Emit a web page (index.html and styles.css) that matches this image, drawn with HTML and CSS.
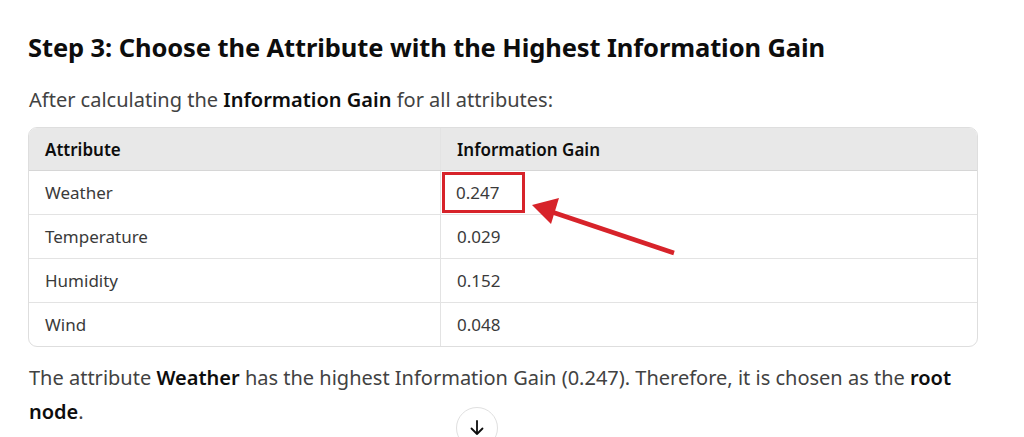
FILE: index.html
```html
<!DOCTYPE html>
<html lang="en">
<head>
<meta charset="utf-8">
<title>Step 3</title>
<link rel="stylesheet" href="styles.css">
</head>
<body>
<main class="content">
  <h3 class="heading">Step 3: Choose the Attribute with the Highest Information Gain</h3>
  <p class="lead">After calculating the <strong>Information Gain</strong> for all attributes:</p>
  <div class="table-wrap">
    <table class="gain-table">
      <thead>
        <tr><th class="col-attr">Attribute</th><th>Information Gain</th></tr>
      </thead>
      <tbody>
        <tr><td>Weather</td><td><span class="highlight">0.247</span></td></tr>
        <tr><td>Temperature</td><td>0.029</td></tr>
        <tr><td>Humidity</td><td>0.152</td></tr>
        <tr><td>Wind</td><td>0.048</td></tr>
      </tbody>
    </table>
    <svg class="pointer" width="160" height="70" viewBox="0 0 160 70" aria-hidden="true">
      <line x1="145" y1="63" x2="20" y2="21" stroke="#d7232a" stroke-width="4.5" stroke-linecap="butt"/>
      <polygon points="3,15 30,8 22,34" fill="#d7232a"/>
    </svg>
  </div>
  <p class="conclusion">The attribute <strong>Weather</strong> has the highest Information Gain (0.247). Therefore, it is chosen as the <strong>root node</strong>.</p>
</main>
<button class="scroll-down" aria-label="Scroll down">
  <svg width="20" height="20" viewBox="0 0 20 20"><path d="M10 3v13M4.5 10.5L10 16l5.5-5.5" fill="none" stroke="#0d0d0d" stroke-width="1.8" stroke-linecap="round" stroke-linejoin="round"/></svg>
</button>
</body>
</html>
```

FILE: styles.css
```css
html, body {
  margin: 0;
  padding: 0;
  background: #ffffff;
}
body {
  font-family: "Noto Sans", "Open Sans", sans-serif;
  color: #424242;
  overflow: hidden;
  height: 437px;
}
.content {
  width: 950px;
  margin-left: 28px;
  padding-top: 29px;
}
.heading {
  margin: 0;
  font-size: 25.5px;
  line-height: 36px;
  font-weight: 700;
  color: #0d0d0d;
  letter-spacing: -0.1px;
}
.lead {
  margin: 19px 0 0 1px;
  font-size: 20px;
  line-height: 32px;
}
strong {
  font-weight: 600;
  color: #0d0d0d;
}
.table-wrap {
  position: relative;
  margin-top: 11px;
  border: 1px solid #dedede;
  border-radius: 9px;
}
.gain-table {
  width: 100%;
  border-collapse: collapse;
  font-size: 17px;
}
.gain-table th {
  background: #e8e8e8;
  text-align: left;
  font-weight: 600;
  color: #0d0d0d;
  height: 42px;
  padding: 0 16px;
  border-bottom: 1px solid #d6d6d6;
}
.gain-table th:first-child { border-top-left-radius: 8px; }
.gain-table th:last-child { border-top-right-radius: 8px; }
.gain-table td {
  height: 43px;
  padding: 0 16px;
  border-bottom: 1px solid #e3e3e3;
  color: #3a3a3a;
}
.gain-table tr:last-child td { border-bottom: none; }
.gain-table th:first-child,
.gain-table td:first-child {
  width: 379px;
  border-right: 1px solid #e3e3e3;
}
.highlight {
  display: inline-block;
  margin-left: -15px;
  padding: 6px 23px 6px 11px;
  border: 3.5px solid #d7232a;
}
.pointer {
  position: absolute;
  left: 500px;
  top: 62px;
}
.conclusion {
  margin: 14px 0 0 1px;
  font-size: 20px;
  line-height: 34px;
}
.scroll-down {
  position: absolute;
  left: 456px;
  top: 407px;
  width: 42px;
  height: 42px;
  border-radius: 50%;
  border: 1px solid #e0e0e0;
  background: #ffffff;
  display: flex;
  align-items: center;
  justify-content: center;
  padding: 0;
}
```
